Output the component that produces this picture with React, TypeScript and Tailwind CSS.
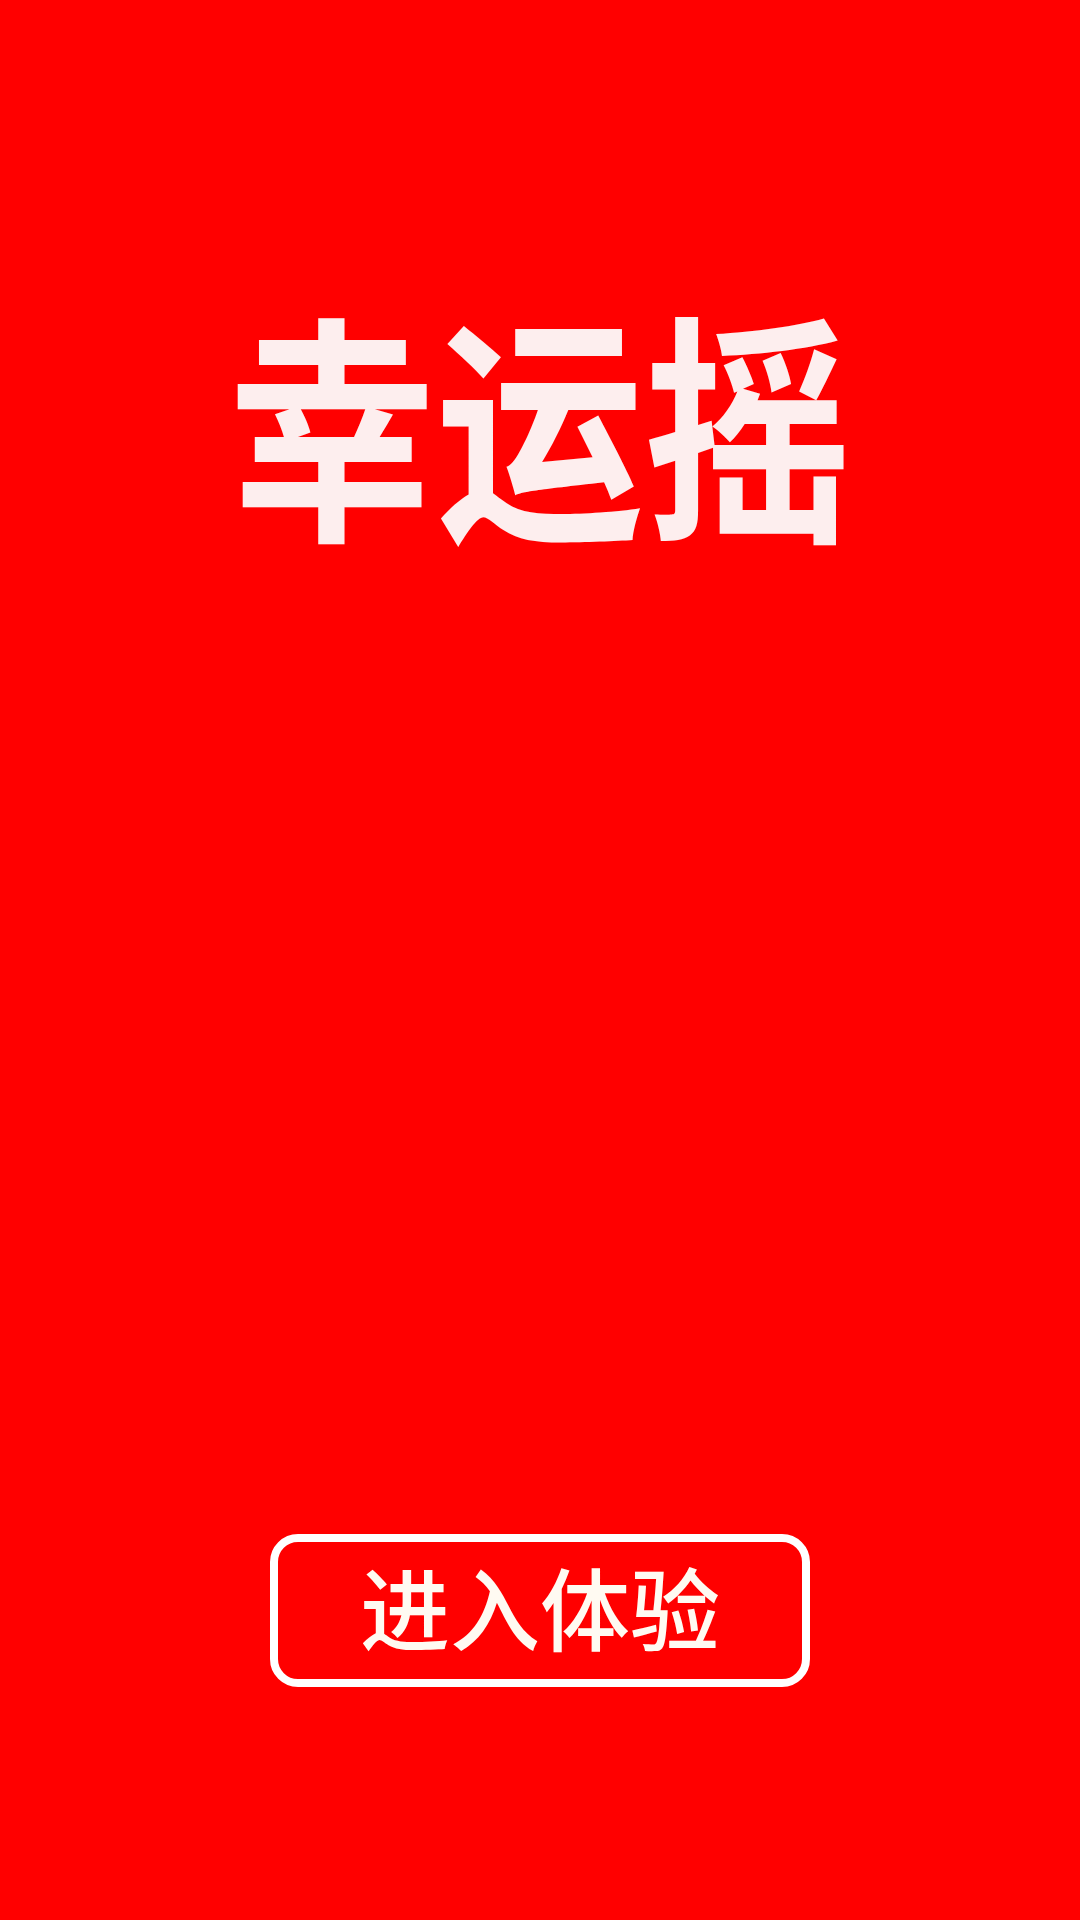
export default function App() {
  return (
    <div
      className="w-[1080px] h-[1920px] bg-[#ff0000] flex flex-col items-center"
      style={{ fontFamily: '"Noto Sans CJK SC", "Noto Sans", sans-serif' }}
    >
      <h1 className="mt-[314px] text-[208px] leading-none font-bold text-[#fdeeee] scale-y-[1.16]">幸运摇</h1>
      <button className="mt-[1012px] w-[540px] h-[153px] rounded-[28px] border-[8px] border-white flex items-center justify-center">
        <span className="-mt-[12px] text-[90px] leading-none font-medium text-[#fffaf2]">进入体验</span>
      </button>
    </div>
  );
}
